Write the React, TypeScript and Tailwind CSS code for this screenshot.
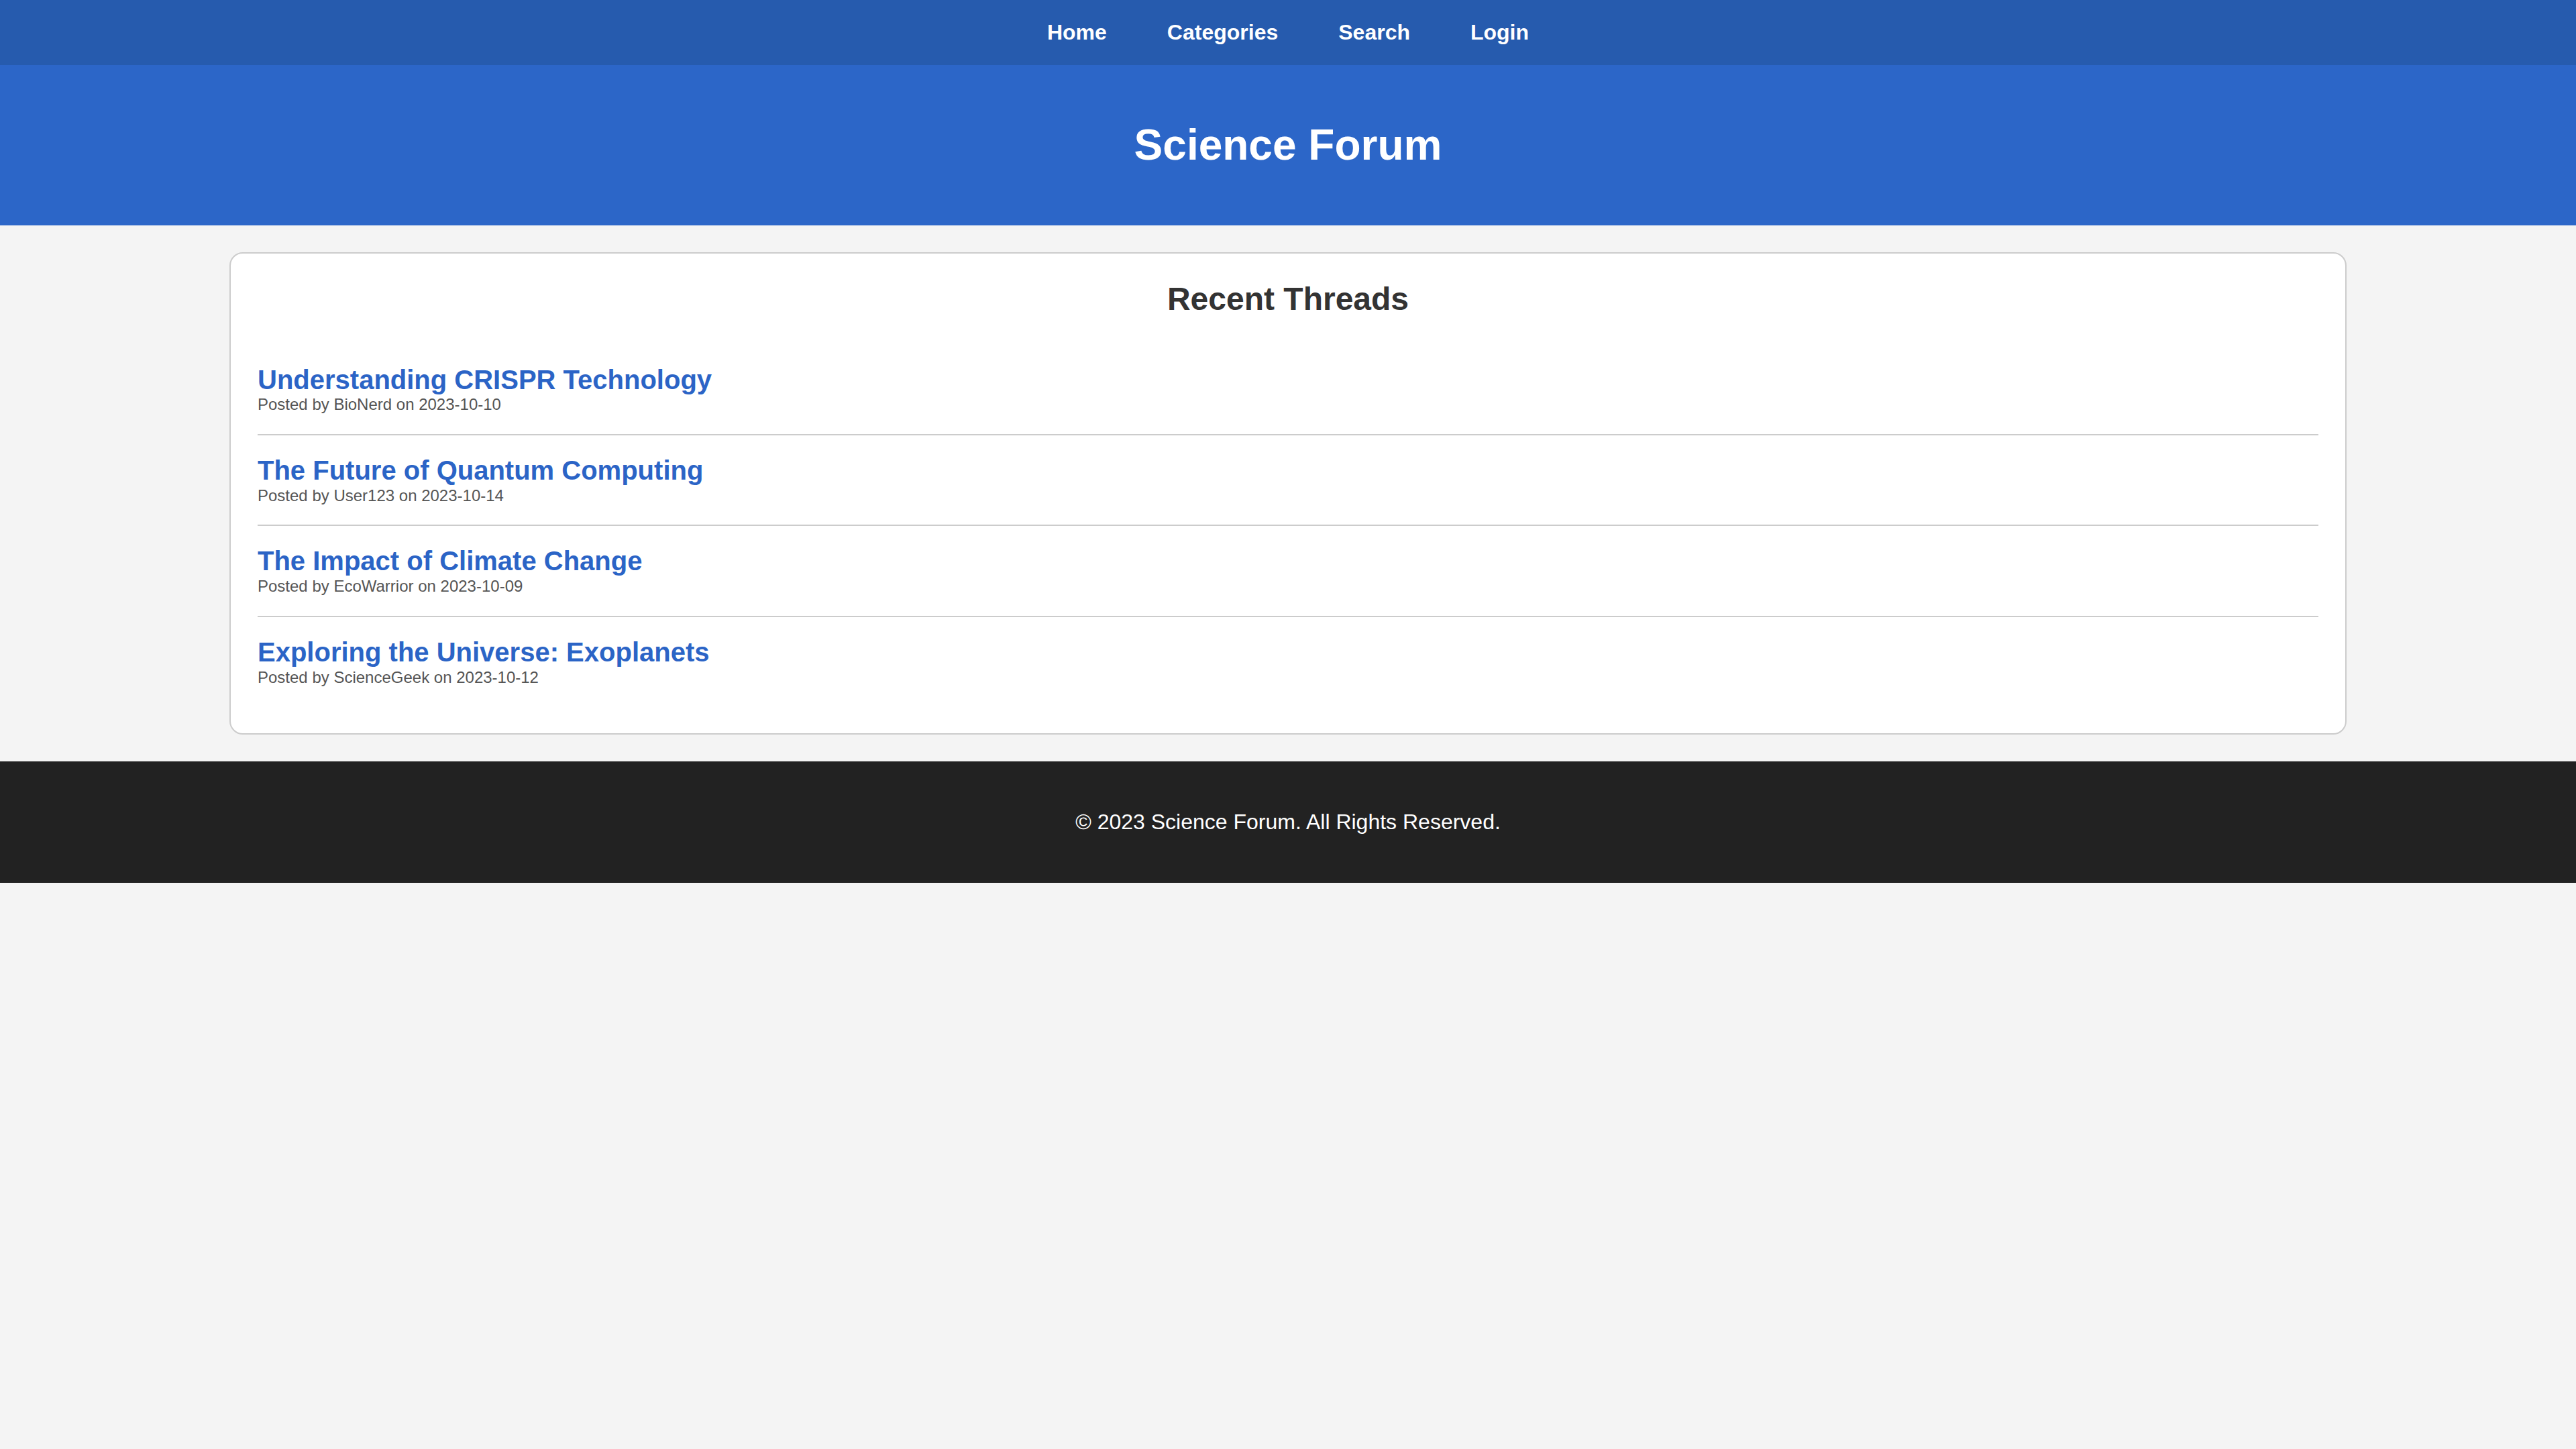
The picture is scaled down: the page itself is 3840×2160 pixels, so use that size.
import React from "react";

const threads = [
  { title: "Understanding CRISPR Technology", author: "BioNerd", date: "2023-10-10" },
  { title: "The Future of Quantum Computing", author: "User123", date: "2023-10-14" },
  { title: "The Impact of Climate Change", author: "EcoWarrior", date: "2023-10-09" },
  { title: "Exploring the Universe: Exoplanets", author: "ScienceGeek", date: "2023-10-12" },
];

export default function App() {
  return (
    <div className="min-h-screen bg-[#f4f4f4] font-['Liberation_Sans',Arial,sans-serif] text-[#333]">
      <nav className="bg-[#265bae] py-[30px]">
        <ul className="flex justify-center gap-[90px]">
          {["Home", "Categories", "Search", "Login"].map((item) => (
            <li key={item}>
              <a href="#" className="text-[32px] leading-[36.8px] font-bold text-white">
                {item}
              </a>
            </li>
          ))}
        </ul>
      </nav>
      <header className="bg-[#2c66c8] py-[40px] text-center text-white">
        <h1 className="my-[43px] text-[64px] leading-[73.6px] font-bold">Science Forum</h1>
      </header>
      <main className="py-[40px]">
        <section className="mx-auto box-content w-4/5 rounded-[20px] border-2 border-[#ccc] bg-white p-[40px]">
          <h2 className="mb-[40px] text-center text-[48px] leading-[55.2px] font-bold text-[#333]">
            Recent Threads
          </h2>
          <div>
            {threads.map((t) => (
              <div key={t.title} className="border-b-2 border-[#ccc] py-[30px] last:border-b-0">
                <h3 className="text-[40px] leading-[45.8px] font-bold">
                  <a href="#" className="text-[#2b64c6]">
                    {t.title}
                  </a>
                </h3>
                <p className="text-[24px] leading-[27.6px] text-[#555]">
                  Posted by {t.author} on {t.date}
                </p>
              </div>
            ))}
          </div>
        </section>
      </main>
      <footer className="bg-[#222] py-[40px] text-center text-white">
        <p className="my-[32px] text-[32px] leading-[36.8px]">© 2023 Science Forum. All Rights Reserved.</p>
      </footer>
    </div>
  );
}
